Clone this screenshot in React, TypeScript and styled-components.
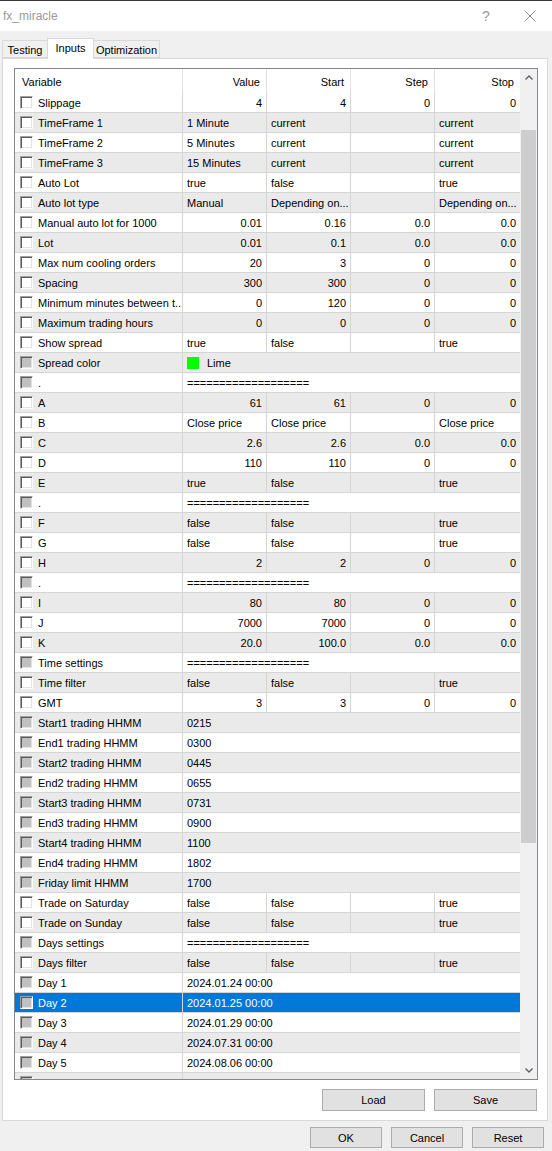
import React from "react";
import styled, { createGlobalStyle } from "styled-components";

const GlobalStyle = createGlobalStyle`
  html, body { margin: 0; padding: 0; background: #f0f0f0; }
  body { font-family: "Liberation Sans", Arial, sans-serif; font-size: 11px; color: #000; }
  * { box-sizing: border-box; }
`;

const Window = styled.div`
  width: 552px;
  height: 1151px;
  background: #f0f0f0;
  display: flex;
  flex-direction: column;
  overflow: hidden;
`;

const TitleBar = styled.div`
  height: 31px;
  flex: none;
  background: #fff;
  border-top: 1px solid #3a3a3a;
  display: flex;
  align-items: center;
  padding-left: 3px;
`;

const Title = styled.div`
  flex: 1;
  font-size: 12px;
  color: #9a9a9a;
`;

const Help = styled.div`
  width: 14px;
  margin-right: 31px;
  font-size: 14px;
  color: #9a9a9a;
  text-align: center;
`;

const CloseBox = styled.div`
  width: 12px;
  height: 12px;
  margin-right: 16px;
  display: flex;
`;

const Body = styled.div`
  flex: 1;
  display: flex;
  flex-direction: column;
  padding: 7px 4px 0 2px;
`;

const TabStrip = styled.div`
  height: 20px;
  display: flex;
  align-items: flex-end;
  padding-left: 1px;
  position: relative;
  z-index: 1;
`;

const Tab = styled.div<{ $active?: boolean; $w: number }>`
  width: ${(p) => p.$w}px;
  height: ${(p) => (p.$active ? 21 : 18)}px;
  margin-bottom: ${(p) => (p.$active ? -1 : 0)}px;
  margin-left: -1px;
  background: ${(p) => (p.$active ? "#fff" : "#f0f0f0")};
  border: 1px solid #d9d9d9;
  border-bottom: ${(p) => (p.$active ? "none" : "1px solid #d9d9d9")};
  display: flex;
  align-items: center;
  justify-content: center;
  padding-top: ${(p) => (p.$active ? 0 : 2)}px;
  padding-bottom: ${(p) => (p.$active ? 2 : 0)}px;
  font-size: 11px;
`;

const Panel = styled.div`
  background: #fff;
  border: 1px solid #d9d9d9;
  padding: 9px 9px 9px 11px;
  display: flex;
  flex-direction: column;
`;

const Grid = styled.div`
  width: 524px;
  height: 1012px;
  border: 1px solid #828790;
  background: #fff;
  display: flex;
`;

const TableArea = styled.div`
  width: 505px;
  overflow: hidden;
  display: flex;
  flex-direction: column;
`;

const COLS = "168px 84px 84px 84px 85px";

const HeaderRow = styled.div`
  flex: none;
  height: 24px;
  display: grid;
  grid-template-columns: ${COLS};
`;

const HeaderCell = styled.div<{ $right?: boolean; $last?: boolean }>`
  display: flex;
  align-items: center;
  justify-content: ${(p) => (p.$right ? "flex-end" : "flex-start")};
  padding: ${(p) => (p.$right ? "1px 6px 0 0" : "1px 0 0 7px")};
  border-right: ${(p) => (p.$last ? "none" : "1px solid #e3e3e3")};
`;

const DataRow = styled.div<{ $alt: boolean; $sel?: boolean }>`
  flex: none;
  height: 20px;
  display: grid;
  grid-template-columns: ${COLS};
  border-bottom: 1px solid #d5d5d5;
  background: ${(p) => (p.$sel ? "#0078d7" : p.$alt ? "#eaeaea" : "#fff")};
  color: ${(p) => (p.$sel ? "#fff" : "#000")};
`;

const Cell = styled.div<{ $right?: boolean; $last?: boolean; $span?: boolean }>`
  display: flex;
  align-items: center;
  justify-content: ${(p) => (p.$right ? "flex-end" : "flex-start")};
  padding: 1px 4px 0 4px;
  white-space: nowrap;
  overflow: hidden;
  grid-column: ${(p) => (p.$span ? "2 / span 4" : "auto")};
  border-right: ${(p) => (p.$last || p.$span ? "none" : "1px solid #d5d5d5")};
`;

const NameCell = styled(Cell)`
  padding: 1px 0 0 0;
`;

const Check = styled.span<{ $disabled?: boolean }>`
  flex: none;
  width: 13px;
  height: 13px;
  margin: -1px 5px 0 5px;
  border: 1px solid;
  border-color: #a0a0a0 #ffffff #ffffff #a0a0a0;
  box-shadow: inset 1px 1px 0 #5a5a5a, inset -1px -1px 0 #e3e3e3;
  background: ${(p) => (p.$disabled ? "#c0c0c0" : "#fff")};
`;

const Swatch = styled.span<{ $color: string }>`
  width: 12px;
  height: 12px;
  margin: -1px 8px 0 0;
  background: ${(p) => p.$color};
`;

const ScrollBar = styled.div`
  width: 17px;
  background: #f0f0f0;
  display: flex;
  flex-direction: column;
`;

const Arrow = styled.div<{ $bottom?: boolean }>`
  height: 17px;
  flex: none;
  display: flex;
  align-items: center;
  justify-content: center;
  margin-top: ${(p) => (p.$bottom ? "auto" : "0")};
`;

const Thumb = styled.div<{ $top: number; $h: number }>`
  width: 15px;
  margin-left: 1px;
  margin-top: ${(p) => p.$top}px;
  height: ${(p) => p.$h}px;
  background: #cdcdcd;
`;

const ButtonRow = styled.div`
  display: flex;
  justify-content: flex-end;
  gap: 9px;
  margin-top: 9px;
  padding-right: 1px;
`;

const Footer = styled.div`
  display: flex;
  justify-content: flex-end;
  gap: 9px;
  padding: 6px 4px 0 0;
`;

const Button = styled.div<{ $w: number; $h: number }>`
  width: ${(p) => p.$w}px;
  height: ${(p) => p.$h}px;
  background: #e1e1e1;
  border: 1px solid #adadad;
  display: flex;
  align-items: center;
  justify-content: center;
  font-size: 11px;
`;

type Row = {
  n: string;
  d?: boolean;
  r?: boolean;
  c?: string[];
  span?: string;
  color?: string;
  sel?: boolean;
};

const EQ = "===================";

const rows: Row[] = [
  { n: "Slippage", r: true, c: ["4", "4", "0", "0"] },
  { n: "TimeFrame 1", c: ["1 Minute", "current", "", "current"] },
  { n: "TimeFrame 2", c: ["5 Minutes", "current", "", "current"] },
  { n: "TimeFrame 3", c: ["15 Minutes", "current", "", "current"] },
  { n: "Auto Lot", c: ["true", "false", "", "true"] },
  { n: "Auto lot type", c: ["Manual", "Depending on...", "", "Depending on..."] },
  { n: "Manual auto lot for 1000", r: true, c: ["0.01", "0.16", "0.0", "0.0"] },
  { n: "Lot", r: true, c: ["0.01", "0.1", "0.0", "0.0"] },
  { n: "Max num cooling orders", r: true, c: ["20", "3", "0", "0"] },
  { n: "Spacing", r: true, c: ["300", "300", "0", "0"] },
  { n: "Minimum minutes between t...", r: true, c: ["0", "120", "0", "0"] },
  { n: "Maximum trading hours", r: true, c: ["0", "0", "0", "0"] },
  { n: "Show spread", c: ["true", "false", "", "true"] },
  { n: "Spread color", d: true, color: "#00ff00", span: "Lime" },
  { n: ".", d: true, span: EQ },
  { n: "A", r: true, c: ["61", "61", "0", "0"] },
  { n: "B", c: ["Close price", "Close price", "", "Close price"] },
  { n: "C", r: true, c: ["2.6", "2.6", "0.0", "0.0"] },
  { n: "D", r: true, c: ["110", "110", "0", "0"] },
  { n: "E", c: ["true", "false", "", "true"] },
  { n: ".", d: true, span: EQ },
  { n: "F", c: ["false", "false", "", "true"] },
  { n: "G", c: ["false", "false", "", "true"] },
  { n: "H", r: true, c: ["2", "2", "0", "0"] },
  { n: ".", d: true, span: EQ },
  { n: "I", r: true, c: ["80", "80", "0", "0"] },
  { n: "J", r: true, c: ["7000", "7000", "0", "0"] },
  { n: "K", r: true, c: ["20.0", "100.0", "0.0", "0.0"] },
  { n: "Time settings", d: true, span: EQ },
  { n: "Time filter", c: ["false", "false", "", "true"] },
  { n: "GMT", r: true, c: ["3", "3", "0", "0"] },
  { n: "Start1 trading HHMM", d: true, span: "0215" },
  { n: "End1 trading HHMM", d: true, span: "0300" },
  { n: "Start2 trading HHMM", d: true, span: "0445" },
  { n: "End2 trading HHMM", d: true, span: "0655" },
  { n: "Start3 trading HHMM", d: true, span: "0731" },
  { n: "End3 trading HHMM", d: true, span: "0900" },
  { n: "Start4 trading HHMM", d: true, span: "1100" },
  { n: "End4 trading HHMM", d: true, span: "1802" },
  { n: "Friday limit HHMM", d: true, span: "1700" },
  { n: "Trade on Saturday", c: ["false", "false", "", "true"] },
  { n: "Trade on Sunday", c: ["false", "false", "", "true"] },
  { n: "Days settings", d: true, span: EQ },
  { n: "Days filter", c: ["false", "false", "", "true"] },
  { n: "Day 1", d: true, span: "2024.01.24 00:00" },
  { n: "Day 2", d: true, span: "2024.01.25 00:00", sel: true },
  { n: "Day 3", d: true, span: "2024.01.29 00:00" },
  { n: "Day 4", d: true, span: "2024.07.31 00:00" },
  { n: "Day 5", d: true, span: "2024.08.06 00:00" },
  { n: "", d: true, span: "" },
];

const Chevron = ({ up }: { up?: boolean }) => (
  <svg width="8" height="5" viewBox="0 0 8 5">
    <polyline
      points={up ? "0.5,4.5 4,1 7.5,4.5" : "0.5,0.5 4,4 7.5,0.5"}
      fill="none"
      stroke="#606060"
      strokeWidth="1.4"
    />
  </svg>
);

export default function App() {
  return (
    <Window>
      <GlobalStyle />
      <TitleBar>
        <Title>fx_miracle</Title>
        <Help>?</Help>
        <CloseBox>
          <svg width="12" height="12" viewBox="0 0 12 12">
            <path d="M0.5 0.5 L11.5 11.5 M11.5 0.5 L0.5 11.5" stroke="#8a8a8a" strokeWidth="1" />
          </svg>
        </CloseBox>
      </TitleBar>
      <Body>
        <TabStrip>
          <Tab $w={46}>Testing</Tab>
          <Tab $w={47} $active>Inputs</Tab>
          <Tab $w={67}>Optimization</Tab>
        </TabStrip>
        <Panel>
          <Grid>
            <TableArea>
              <HeaderRow>
                <HeaderCell>Variable</HeaderCell>
                <HeaderCell $right>Value</HeaderCell>
                <HeaderCell $right>Start</HeaderCell>
                <HeaderCell $right>Step</HeaderCell>
                <HeaderCell $right $last>Stop</HeaderCell>
              </HeaderRow>
              {rows.map((row, i) => (
                <DataRow key={i} $alt={i % 2 === 1} $sel={row.sel}>
                  <NameCell>
                    <Check $disabled={row.d} />
                    {row.n}
                  </NameCell>
                  {row.span !== undefined ? (
                    <Cell $span>
                      {row.color && <Swatch $color={row.color} />}
                      {row.span}
                    </Cell>
                  ) : (
                    row.c!.map((v, j) => (
                      <Cell key={j} $right={row.r} $last={j === 3}>
                        {v}
                      </Cell>
                    ))
                  )}
                </DataRow>
              ))}
            </TableArea>
            <ScrollBar>
              <Arrow>
                <Chevron up />
              </Arrow>
              <Thumb $top={44} $h={713} />
              <Arrow $bottom>
                <Chevron />
              </Arrow>
            </ScrollBar>
          </Grid>
          <ButtonRow>
            <Button $w={103} $h={22}>Load</Button>
            <Button $w={103} $h={22}>Save</Button>
          </ButtonRow>
        </Panel>
        <Footer>
          <Button $w={72} $h={21}>OK</Button>
          <Button $w={72} $h={21}>Cancel</Button>
          <Button $w={72} $h={21}>Reset</Button>
        </Footer>
      </Body>
    </Window>
  );
}
